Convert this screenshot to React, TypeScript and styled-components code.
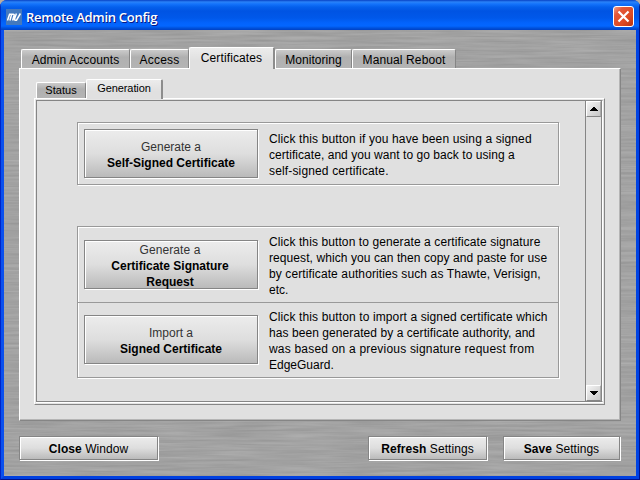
import React from 'react';
import styled, { createGlobalStyle, css } from 'styled-components';

const brushed = `url("data:image/svg+xml,${encodeURIComponent(
  '<svg xmlns="http://www.w3.org/2000/svg" width="632" height="446"><filter id="n" x="0" y="0" width="100%" height="100%" color-interpolation-filters="sRGB"><feTurbulence type="fractalNoise" baseFrequency="0.015 0.4" numOctaves="3" seed="4"/><feColorMatrix values="0.12 0 0 0 0.575 0.12 0 0 0 0.575 0.12 0 0 0 0.575 0 0 0 0 1"/></filter><rect width="632" height="446" filter="url(#n)"/></svg>'
)}")`;

const GlobalStyle = createGlobalStyle`
  *, *::before, *::after { box-sizing: border-box; }
  body { margin: 0; background: #b9ada0; overflow: hidden; font: 12px/16px "Liberation Sans", Arial, sans-serif; color: #000; }
  button { font: inherit; color: inherit; margin: 0; padding: 0; border: 0; }
`;

const Window = styled.main`
  width: 640px;
  height: 480px;
  display: flex;
  flex-direction: column;
  border-radius: 7px 7px 0 0;
  overflow: hidden;
  background: #0040e0;
`;

const TitleBar = styled.header`
  height: 30px;
  flex: none;
  display: flex;
  align-items: center;
  padding: 3px 5px 0 6px;
  background: linear-gradient(#0842c4 0, #2a82f8 2px, #1473fb 4px, #0560ec 7px, #0054e3 11px, #0058ea 18px, #0364fc 23px, #0366ff 26px, #0052dc 28px, #0041c4 30px);
  box-shadow: inset 1px 0 #0030c0, inset -1px 0 #001c90;
`;

const Logo = styled.svg`
  width: 16px;
  height: 16px;
  flex: none;
`;

const Title = styled.h1`
  margin: 0 auto 0 4px;
  font: 600 13px/20px "Open Sans", sans-serif;
  letter-spacing: -0.28px;
  white-space: nowrap;
  color: #fff;
  text-shadow: 1px 1px #0a1883;
`;

const CloseButton = styled.button`
  width: 21px;
  height: 21px;
  margin-right: 1px;
  display: grid;
  place-items: center;
  border: 1px solid #fff;
  border-radius: 3px;
  background: linear-gradient(135deg, #f0a088 0, #e3583a 25%, #dd4a22 65%, #b83410 100%);
`;

const Frame = styled.div`
  flex: 1;
  display: flex;
  border: solid;
  border-width: 0 1px 1px;
  border-color: #0018a8 #00128c #00128c #0024c8;
`;

const Body = styled.div`
  flex: 1;
  display: flex;
  flex-direction: column;
  border: solid;
  border-width: 0 3px 3px;
  border-color: #0046e8 #0044e4 #0040e0 #0a50ee;
  background: #a2a2a2 ${brushed};
  padding: 17px 15px 0;
`;

const TabRow = styled.nav<{ $height: number; $left: number }>`
  height: ${p => p.$height}px;
  flex: none;
  display: flex;
  align-items: flex-end;
  padding-left: ${p => p.$left}px;
  position: relative;
  z-index: 1;
`;

const Tab = styled.button<{ $width: number; $height: number; $active?: boolean; $small?: boolean }>`
  width: ${p => p.$width}px;
  height: ${p => p.$height}px;
  flex: none;
  border: solid;
  border-width: 1px 1px 0 1px;
  border-color: #fff #858585 #fff #fff;
  border-radius: 2px 2px 0 0;
  background: linear-gradient(#cbcbcb, #b0b0b0 40%, #b4b4b4);
  white-space: nowrap;
  padding-top: ${p => (p.$small ? 0 : 1)}px;
  line-height: ${p => (p.$small ? 15 : 18)}px;
  font-size: ${p => (p.$small ? 11 : 12)}px;
  ${p => p.$active && css`
    background: linear-gradient(#ececec, #e0e0e0 60%);
    margin-bottom: -1px;
    padding: 0 0 2px;
    border-right: 2px solid #8c8c8c;
  `}
`;

const Panel = styled.section`
  width: 602px;
  height: 353px;
  flex: none;
  display: flex;
  flex-direction: column;
  padding: 10px 14px 0;
  background: #e0e0e0;
  border: 1px solid;
  border-color: #fff #858585 #858585 #fff;
  box-shadow: inset -1px -1px #b5b5b5;
`;

const InnerFrame = styled.div`
  width: 571px;
  height: 307px;
  flex: none;
  border: 1px solid;
  border-color: #fff #858585 #858585 #fff;
  padding: 1px;
  background: #e4e4e4;
`;

const Viewport = styled.div`
  width: 567px;
  height: 302px;
  display: flex;
  border: 1px solid;
  border-color: #858585 #fff #858585 #858585;
  background: #e0e0e0;
  box-shadow: 0 1px #fff;
`;

const Content = styled.div`
  flex: 1;
  padding: 21px 0 0 40px;
`;

const Group = styled.div<{ $gap?: number }>`
  width: 482px;
  border: 1px solid #999;
  box-shadow: inset 1px 1px #fff, 1px 1px #fff;
  margin-bottom: ${p => p.$gap ?? 0}px;
`;

const Row = styled.div<{ $height: number; $divided?: boolean; $top: number }>`
  height: ${p => p.$height}px;
  display: flex;
  padding: ${p => p.$top}px 0 0 6px;
  border-top: ${p => (p.$divided ? '1px solid #999' : '0')};
`;

const RaisedButton = styled.button<{ $width: number; $height: number }>`
  width: ${p => p.$width}px;
  height: ${p => p.$height}px;
  flex: none;
  border: 1px solid #858585;
  box-shadow: inset 1px 1px #fff, 1px 1px #fff;
  background: linear-gradient(#ececec, #dedede 50%, #bababa);
  display: flex;
  justify-content: center;
  align-items: center;
  white-space: pre;
`;

const ButtonText = styled.span<{ $top?: number; $right?: number }>`
  display: block;
  padding: ${p => p.$top ?? 0}px ${p => p.$right ?? 0}px 0 0;
  text-align: center;
  color: #333;
  b { color: #000; }
`;

const Spaced = styled.span<{ $ls: number }>`
  letter-spacing: ${p => p.$ls}px;
`;

const FooterLabel = styled.span<{ $ls?: number }>`
  padding-top: 2px;
  letter-spacing: ${p => p.$ls ?? 0}px;
`;

const Description = styled.div<{ $top: number }>`
  margin: ${p => p.$top}px 0 0 11px;
  white-space: nowrap;
`;

const Line = styled.div<{ $ls: number }>`
  letter-spacing: ${p => p.$ls}px;
`;

const ScrollBar = styled.div`
  width: 17px;
  flex: none;
  display: flex;
  flex-direction: column;
  justify-content: space-between;
  border-left: 1px solid #858585;
  border-right: 1px solid #858585;
  background: #e0e0e0;
`;

const ScrollButton = styled.button`
  height: 16px;
  display: grid;
  place-items: center;
  border: 1px solid;
  border-color: #fff #aaa #858585 #fff;
  background: linear-gradient(135deg, #f4f4f4, #c6c6c6);
`;

const Footer = styled.footer`
  width: 601px;
  display: flex;
  gap: 16px;
  padding-top: 15px;
`;

const Spacer = styled.div`
  flex: 1;
`;

const tabs = [
  { label: 'Admin Accounts', width: 109, ls: 0.12 },
  { label: 'Access', width: 59, ls: 0.2 },
  { label: 'Certificates', width: 86, ls: 0.12, active: true },
  { label: 'Monitoring', width: 77, ls: 0.05 },
  { label: 'Manual Reboot', width: 104, ls: 0.12 },
];

const Arrow = ({ up }: { up?: boolean }) => (
  <svg width="8" height="4" shapeRendering="crispEdges">
    <path d={up ? 'M3 0h2v1h1v1h1v1h1v1H0V3h1V2h1V1h1z' : 'M0 0h8v1H7v1H6v1H5v1H3V3H2V2H1V1H0z'} />
  </svg>
);

export default function App() {
  return (
    <>
      <GlobalStyle />
      <Window>
        <TitleBar>
          <Logo viewBox="0 0 16 16">
            <rect width="16" height="16" fill="#4479bd" />
            <path d="M1.5 11.5 3.6 5.2h3.6q1.3 0 .9 1.3L6.6 11.5M5.6 5.5 3.9 11.5M10.4 4.5 8.6 9.8q-.4 1.4.8 1.4h1.1L14.4 4.5" fill="none" stroke="#fff" strokeWidth="1.5" />
          </Logo>
          <Title>Remote Admin Config</Title>
          <CloseButton aria-label="Close">
            <svg width="13" height="13" viewBox="0 0 13 13">
              <path d="M1.5 1.5l10 10M11.5 1.5l-10 10" stroke="#fff" strokeWidth="2.2" />
            </svg>
          </CloseButton>
        </TitleBar>
        <Frame>
          <Body>
            <TabRow $height={21} $left={2}>
              {tabs.map(t => (
                <Tab key={t.label} $width={t.width} $height={t.active ? 22 : 19} $active={t.active}>
                  <Spaced $ls={t.ls}>{t.label}</Spaced>
                </Tab>
              ))}
            </TabRow>
            <Panel>
              <TabRow $height={19} $left={2}>
                <Tab $width={50} $height={16} $small><Spaced $ls={0.05}>Status</Spaced></Tab>
                <Tab $width={77} $height={20} $small $active><Spaced $ls={-0.08}>Generation</Spaced></Tab>
              </TabRow>
              <InnerFrame>
                <Viewport>
                  <Content>
                    <Group $gap={41}>
                      <Row $height={61} $top={6}>
                        <RaisedButton $width={174} $height={49}>
                          <ButtonText $top={2}>Generate a<br /><b>Self-Signed Certificate</b></ButtonText>
                        </RaisedButton>
                        <Description $top={2}>
                          <Line $ls={0.12}>Click this button if you have been using a signed</Line>
                          <Line $ls={0.05}>certificate, and you want to go back to using a</Line>
                          <Line $ls={0.15}>self-signed certificate.</Line>
                        </Description>
                      </Row>
                    </Group>
                    <Group>
                      <Row $height={75} $top={13}>
                        <RaisedButton $width={174} $height={49}>
                          <ButtonText $top={3} $right={2}><Spaced $ls={0.1}>Generate a</Spaced><br /><b>Certificate Signature<br />Request</b></ButtonText>
                        </RaisedButton>
                        <Description $top={-6}>
                          <Line $ls={0.1}>Click this button to generate a certificate signature</Line>
                          <Line $ls={0.08}>request, which you can then copy and paste for use</Line>
                          <Line $ls={0.11}>by certificate authorities such as Thawte, Verisign,</Line>
                          <Line $ls={0}>etc.</Line>
                        </Description>
                      </Row>
                      <Row $height={75} $top={12} $divided>
                        <RaisedButton $width={174} $height={49}>
                          <ButtonText $top={2}>Import a<br /><b>Signed Certificate</b></ButtonText>
                        </RaisedButton>
                        <Description $top={-6}>
                          <Line $ls={0.12}>Click this button to import a signed certificate which</Line>
                          <Line $ls={0.07}>has been generated by a certificate authority, and</Line>
                          <Line $ls={0.2}>was based on a previous signature request from</Line>
                          <Line $ls={0}>EdgeGuard.</Line>
                        </Description>
                      </Row>
                    </Group>
                  </Content>
                  <ScrollBar>
                    <ScrollButton aria-label="Scroll up"><Arrow up /></ScrollButton>
                    <ScrollButton aria-label="Scroll down"><Arrow /></ScrollButton>
                  </ScrollBar>
                </Viewport>
              </InnerFrame>
            </Panel>
            <Footer>
              <RaisedButton $width={139} $height={24}><FooterLabel $ls={0.05}><b>Close</b> Window</FooterLabel></RaisedButton>
              <Spacer />
              <RaisedButton $width={119} $height={24}><FooterLabel $ls={0.08}><b>Refresh</b> Settings</FooterLabel></RaisedButton>
              <RaisedButton $width={117} $height={24}><FooterLabel $ls={0.05}><b>Save</b> Settings</FooterLabel></RaisedButton>
            </Footer>
          </Body>
        </Frame>
      </Window>
    </>
  );
}
